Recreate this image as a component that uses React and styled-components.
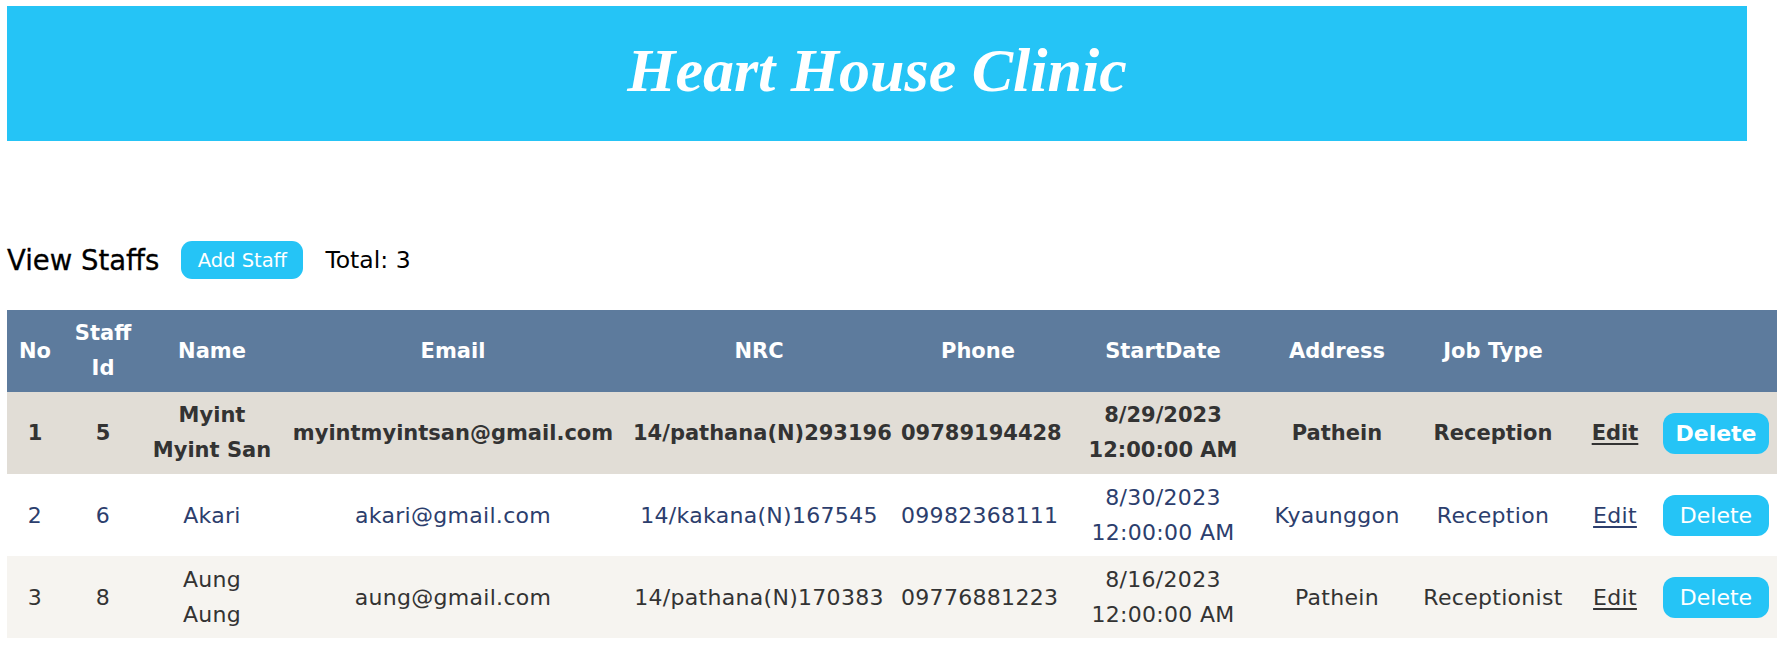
import React from "react";
import styled, { createGlobalStyle } from "styled-components";

const GlobalStyle = createGlobalStyle`
  html, body { margin: 0; padding: 0; background: #ffffff; }
  body {
    font-family: "DejaVu Sans", "Noto Sans", sans-serif;
    overflow: hidden;
  }
`;

const Page = styled.div`
  padding: 6px 0 0 7px;
`;

const Banner = styled.header`
  width: 1740px;
  height: 135px;
  box-sizing: border-box;
  padding-bottom: 6px;
  background: #25c4f6;
  display: flex;
  align-items: center;
  justify-content: center;
`;

const Title = styled.h1`
  margin: 0;
  font-family: "Liberation Serif", "Times New Roman", serif;
  font-style: italic;
  font-weight: 700;
  font-size: 62px;
  color: #ffffff;
`;

const Toolbar = styled.div`
  margin-top: 100px;
  height: 38px;
  display: flex;
  align-items: center;
  gap: 22px;
`;

const Heading = styled.h2`
  margin: 0;
  font-size: 27.5px;
  font-weight: 500;
  color: #000000;
  -webkit-text-stroke: 0.3px #000000;
`;

const AddButton = styled.button`
  width: 122px;
  height: 38px;
  border: 0;
  border-radius: 11px;
  background: #25c4f6;
  color: #ffffff;
  font-family: inherit;
  font-size: 19.5px;
  padding: 0;
  cursor: pointer;
`;

const Total = styled.span`
  font-size: 23.5px;
  color: #000000;
`;

const Table = styled.table`
  margin-top: 31px;
  width: 1770px;
  table-layout: fixed;
  border-collapse: collapse;
`;

const Col = styled.col`
  width: ${(p) => p.$w}px;
`;

const HeadCell = styled.th`
  background: #5d7b9d;
  color: #ffffff;
  font-size: 21px;
  font-weight: 700;
  line-height: 35px;
  padding: 6px 8px;
  text-align: center;
`;

const tones = {
  active: { bg: "#e1ddd6", color: "#333333", weight: 700, size: 21, spacing: 0 },
  plain: { bg: "#ffffff", color: "#2c3e6d", weight: 400, size: 22, spacing: 0.3 },
  soft: { bg: "#f6f4f0", color: "#333333", weight: 400, size: 22, spacing: 0.3 },
};

const Row = styled.tr`
  background: ${(p) => tones[p.$tone].bg};
  color: ${(p) => tones[p.$tone].color};
  font-weight: ${(p) => tones[p.$tone].weight};
  font-size: ${(p) => tones[p.$tone].size}px;
  letter-spacing: ${(p) => tones[p.$tone].spacing}px;
`;

const Cell = styled.td`
  padding: 6px 8px;
  line-height: 35px;
  text-align: center;
  white-space: normal;
`;

const EditLink = styled.a`
  color: inherit;
  text-decoration: underline;
  text-underline-offset: 3px;
  cursor: pointer;
`;

const DeleteButton = styled.button`
  width: 106px;
  height: 41px;
  border: 0;
  border-radius: 12px;
  background: #25c4f6;
  color: #ffffff;
  font-family: inherit;
  font-size: 22px;
  font-weight: inherit;
  letter-spacing: 0;
  padding: 0;
  cursor: pointer;
  vertical-align: middle;
`;

const columns = [
  { label: "No", w: 56 },
  { label: "Staff Id", w: 80 },
  { label: "Name", w: 138 },
  { label: "Email", w: 344 },
  { label: "NRC", w: 268 },
  { label: "Phone", w: 170 },
  { label: "StartDate", w: 200 },
  { label: "Address", w: 148 },
  { label: "Job Type", w: 164 },
  { label: "", w: 80 },
  { label: "", w: 122 },
];

const staffs = [
  {
    no: 1,
    id: 5,
    name: "Myint Myint San",
    email: "myintmyintsan@gmail.com",
    nrc: "14/pathana(N)293196",
    phone: "09789194428",
    start: "8/29/2023 12:00:00 AM",
    address: "Pathein",
    job: "Reception",
    tone: "active",
  },
  {
    no: 2,
    id: 6,
    name: "Akari",
    email: "akari@gmail.com",
    nrc: "14/kakana(N)167545",
    phone: "09982368111",
    start: "8/30/2023 12:00:00 AM",
    address: "Kyaunggon",
    job: "Reception",
    tone: "plain",
  },
  {
    no: 3,
    id: 8,
    name: "Aung Aung",
    email: "aung@gmail.com",
    nrc: "14/pathana(N)170383",
    phone: "09776881223",
    start: "8/16/2023 12:00:00 AM",
    address: "Pathein",
    job: "Receptionist",
    tone: "soft",
  },
];

export default function App() {
  return (
    <>
      <GlobalStyle />
      <Page>
        <Banner>
          <Title>Heart House Clinic</Title>
        </Banner>
        <Toolbar>
          <Heading>View Staffs</Heading>
          <AddButton>Add Staff</AddButton>
          <Total>Total: 3</Total>
        </Toolbar>
        <Table>
          <colgroup>
            {columns.map((c, i) => (
              <Col key={i} $w={c.w} />
            ))}
          </colgroup>
          <thead>
            <tr>
              {columns.map((c, i) => (
                <HeadCell key={i}>{c.label}</HeadCell>
              ))}
            </tr>
          </thead>
          <tbody>
            {staffs.map((s) => (
              <Row key={s.no} $tone={s.tone}>
                <Cell>{s.no}</Cell>
                <Cell>{s.id}</Cell>
                <Cell>{s.name}</Cell>
                <Cell>{s.email}</Cell>
                <Cell>{s.nrc}</Cell>
                <Cell>{s.phone}</Cell>
                <Cell>{s.start}</Cell>
                <Cell>{s.address}</Cell>
                <Cell>{s.job}</Cell>
                <Cell>
                  <EditLink>Edit</EditLink>
                </Cell>
                <Cell>
                  <DeleteButton>Delete</DeleteButton>
                </Cell>
              </Row>
            ))}
          </tbody>
        </Table>
      </Page>
    </>
  );
}
